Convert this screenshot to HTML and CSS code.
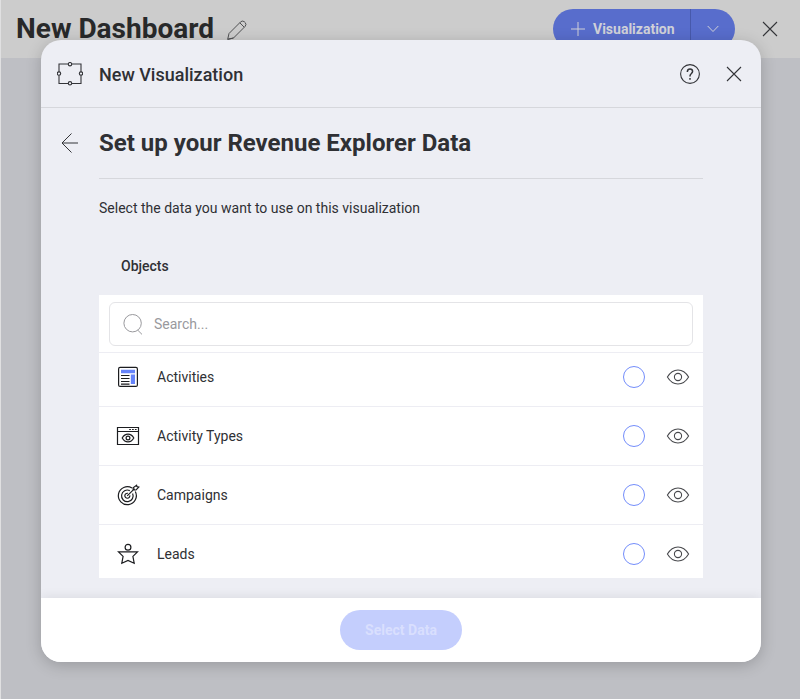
FILE: index.html
```
<!DOCTYPE html>
<html lang="en">
<head>
<meta charset="utf-8">
<title>New Dashboard</title>
<link rel="stylesheet" href="styles.css">
</head>
<body>
<svg class="defs" aria-hidden="true">
  <symbol id="eye" viewBox="0 0 24 18"><path d="M1.4 9C7 -.4 17 -.4 22.6 9C17 18.4 7 18.4 1.4 9Z"/><circle cx="12" cy="9" r="3.6"/></symbol>
  <symbol id="close" viewBox="0 0 16 16"><path d="M1 1L15 15M15 1L1 15"/></symbol>
</svg>
<header class="topbar">
  <h1 class="dash-title">New Dashboard</h1>
  <svg class="pencil" viewBox="0 0 20 20"><path d="M.7 19.3L2 13.5L13.4 2.1Q15.1 .2 17.2 1.6L18.3 2.7Q19.8 4.6 18 6.5L6.5 18ZM12.8 2.8L17.2 7.2M6.5 18L.7 19.3"/></svg>
  <div class="split">
    <div class="split-main"><svg class="plus" viewBox="0 0 14 14"><path d="M7 0V14M0 7H14"/></svg>Visualization</div>
    <div class="split-more"><svg class="chevron" viewBox="0 0 12 8"><path d="M.7 1L6 6.5L11.3 1"/></svg></div>
  </div>
  <svg class="close"><use href="#close"/></svg>
</header>
<main class="overlay">
  <section class="modal">
    <header class="modal-head">
      <svg class="frame" viewBox="0 0 26 24"><path d="M2 10V2H11.4M14.6 2H24V10M24 13.2V21.5H14.6M11.4 21.5H2V13.2"/><circle cx="13" cy="2.2" r="1.7"/><circle cx="24" cy="11.6" r="1.7"/><circle cx="13" cy="21.3" r="1.7"/><circle cx="2" cy="11.6" r="1.7"/></svg>
      <h2 class="modal-title">New Visualization</h2>
      <svg class="help" viewBox="0 0 22 22"><circle cx="11" cy="11" r="9.4"/><path class="help-mark" d="M8.4 9V8.4Q8.6 6 11 6Q13.5 6 13.6 8.3Q13.6 9.4 12.4 10.5Q11 11.7 11 13.1V13.5M11 15V16.7"/></svg>
      <svg class="close"><use href="#close"/></svg>
    </header>
    <div class="modal-body">
      <div class="step">
        <svg class="back" viewBox="0 0 18 20"><path d="M17 10H1M10.5 .5L1 10L10.5 19.5"/></svg>
        <h3 class="step-title">Set up your Revenue Explorer Data</h3>
      </div>
      <p class="hint">Select the data you want to use on this visualization</p>
      <h4 class="label">Objects</h4>
      <div class="panel">
        <div class="search-wrap">
          <div class="search"><svg class="glass" viewBox="0 0 20 22"><circle cx="9.6" cy="10.2" r="8.7"/><path d="M14.7 17.1L19 21.4"/></svg>Search...</div>
        </div>
        <div class="list">
          <div class="rows">
            <div class="row">
              <svg class="obj" viewBox="0 0 24 24"><rect x="2.6" y="2.4" width="18.8" height="19" rx="1.5"/><path class="accent" d="M5 4.8H19V8.2H5ZM14.8 9.6H19V19H14.8Z"/><path d="M5 10.5H13.5M5 13.5H13.5M5 16.5H13.5M5 19.2H13.5"/></svg>
              <span class="name">Activities</span><span class="radio"></span><svg class="eye"><use href="#eye"/></svg>
            </div>
            <div class="row">
              <svg class="obj" viewBox="0 0 24 24"><path d="M1.5 3.5H22.5V20.5H1.5ZM1.5 7.5H22.5"/><path d="M13.2 5.5H20.6" stroke-width="1" stroke-dasharray="1.7 1.15"/><path d="M6.2 14C9.1 8.8 14.9 8.8 17.8 14C14.9 19.2 9.1 19.2 6.2 14Z"/><circle cx="12" cy="14" r="1.9"/></svg>
              <span class="name">Activity Types</span><span class="radio"></span><svg class="eye"><use href="#eye"/></svg>
            </div>
            <div class="row">
              <svg class="obj" viewBox="0 0 24 24"><path d="M16 5A9 9 0 1 0 19.3 8.5M13.8 7.6A5.8 5.8 0 1 0 16.6 10.4M11.9 10.3A2.5 2.5 0 1 0 13.8 12.3M11.2 12.9L18.6 5.6M17.1 7V4.8L20.6 2.2L20.9 3.6L22.8 4.1L20 7Z"/></svg>
              <span class="name">Campaigns</span><span class="radio"></span><svg class="eye"><use href="#eye"/></svg>
            </div>
            <div class="row">
              <svg class="obj" viewBox="0 0 24 24"><circle cx="12" cy="5.3" r="2.9"/><path d="M2.5 9.9H21.5L16.9 14.4L18.2 21.2L12 18.5L5.8 21.2L7.1 14.4Z"/></svg>
              <span class="name">Leads</span><span class="radio"></span><svg class="eye"><use href="#eye"/></svg>
            </div>
          </div>
        </div>
      </div>
    </div>
    <footer class="modal-foot"><button class="select" disabled>Select Data</button></footer>
  </section>
</main>
</body>
</html>
```
FILE: styles.css
```
* { box-sizing: border-box; }
body {
  margin: 0;
  height: 699px;
  overflow: hidden;
  background: #bebfc4;
  border-left: 1px solid #e0e0e1;
  font-family: Roboto, "Liberation Sans", sans-serif;
  color: #2f3034;
}
h1, h2, h3, h4, p { margin: 0; }
svg { display: block; flex: none; fill: none; stroke: #333438; stroke-width: 1.1; }
.defs { display: none; }

.topbar { height: 58px; display: flex; align-items: center; padding: 0 22px 0 15px; background: #cccccc; }
.dash-title { width: 198px; font-size: 28px; line-height: 36px; font-weight: 700; white-space: nowrap; color: #28292a; margin-top: -1px; }
.pencil { width: 20px; height: 20px; margin-left: 13px; margin-top: 1px; stroke-width: 1; stroke: #505153; }
.split { display: flex; width: 182px; height: 40px; margin-left: auto; margin-right: 27px; border-radius: 20px; overflow: hidden; background: #586dcc; color: #d0d1d8; }
.split svg { stroke: #d0d1d8; stroke-width: 1; }
.split-main { width: 138px; display: flex; align-items: center; padding-left: 18px; font-size: 14px; font-weight: 700; border-right: 1px solid #4759ab; }
.plus { width: 14px; height: 14px; margin-right: 8px; }
.split-more { flex: 1; display: flex; align-items: center; justify-content: center; }
.chevron { width: 12px; height: 8px; }
.close { width: 16px; height: 16px; }

.overlay { display: flex; justify-content: center; padding-left: 1px; margin-top: -18px; }
.modal {
  position: relative;
  width: 720px;
  height: 622px;
  display: flex;
  flex-direction: column;
  border-radius: 20px;
  overflow: hidden;
  background: #edeef4;
  box-shadow: 0 3px 16px rgba(0, 0, 0, .2);
}
.modal-head { height: 68px; flex: none; display: flex; align-items: center; padding: 0 19px 0 16px; border-bottom: 1px solid #d6d7dc; }
.frame { width: 26px; height: 24px; margin-right: 16px; margin-top: 1px; }
.modal-title { font-size: 18px; line-height: 24px; font-weight: 500; margin-top: 2px; }
.help { width: 22px; height: 22px; margin-left: auto; margin-right: 25px; }
.help-mark { stroke-width: 1.5; }
.modal-body { flex: 1; padding: 0 58px; }
.step { height: 71px; display: flex; align-items: center; border-bottom: 1px solid #d6d7dc; }
.back { width: 18px; height: 20px; margin-left: -38px; margin-right: 20px; stroke-width: 1; }
.step-title { font-size: 24px; line-height: 30px; font-weight: 700; white-space: nowrap; }
.hint { font-size: 14px; line-height: 20px; margin-top: 19px; }
.label { font-size: 14px; line-height: 20px; font-weight: 500; margin: 38px 0 19px 22px; }
.panel { height: 283px; background: #fff; }
.search-wrap { padding: 7px 10px 6px; border-bottom: 1px solid #ededf3; }
.search { height: 44px; display: flex; align-items: center; padding-left: 13px; border: 1px solid #e4e4e7; border-radius: 6px; color: #99999d; font-size: 14px; }
.glass { width: 20px; height: 22px; margin-right: 11px; stroke: #99999d; stroke-width: 1; }
.list { height: 225px; overflow: hidden; }
.rows { margin-top: -5px; }
.row { height: 59px; display: flex; align-items: center; padding: 0 14px 0 17px; border-bottom: 1px solid #ededf3; font-size: 14px; }
.obj { width: 24px; height: 24px; stroke-width: 1.2; stroke: #1c1d20; }
.accent { fill: #6684fa; stroke: none; }
.name { flex: 1; margin-left: 17px; }
.radio { width: 22px; height: 22px; border: 1px solid #738dfb; border-radius: 50%; margin-right: 21px; }
.eye { width: 24px; height: 18px; margin-right: -1px; stroke: #48494d; }
.modal-foot { position: relative; height: 64px; flex: none; display: flex; align-items: center; justify-content: center; background: #fff; box-shadow: 0 -2px 10px rgba(0, 0, 0, .07); }
.select { width: 122px; height: 40px; border: 0; border-radius: 20px; background: #c4cefd; color: #d9dffe; font: 700 14px Roboto, sans-serif; }
```
